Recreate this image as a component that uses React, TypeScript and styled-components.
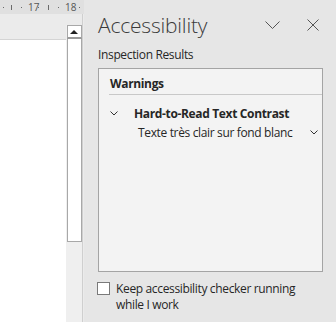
import React from "react";
import styled, { createGlobalStyle } from "styled-components";

const Global = createGlobalStyle`
  html, body { margin: 0; padding: 0; }
  body { width: 336px; height: 322px; overflow: hidden; font-family: "Open Sans", "Noto Sans", sans-serif; }
`;

const Screen = styled.div`
  display: flex;
  width: 336px;
  height: 322px;
  overflow: hidden;
`;

const LeftArea = styled.div`
  width: 84px;
  display: flex;
  flex-direction: column;
  background: #ebebeb;
`;

const Ruler = styled.div`
  height: 14px;
  background: #e0e0e0;
  position: relative;
  font-family: "Open Sans", sans-serif;
  font-size: 10px;
  color: #555;
`;

const RulerMark = styled.span<{ $x: number }>`
  position: absolute;
  left: ${(p) => p.$x}px;
  top: 0;
  line-height: 14px;
`;

const Tick = styled.span<{ $x: number; $h: number }>`
  position: absolute;
  left: ${(p) => p.$x}px;
  top: ${(p) => (14 - p.$h) / 2}px;
  width: 1px;
  height: ${(p) => p.$h}px;
  background: #6a6a6a;
`;

const Body = styled.div`
  flex: 1;
  display: flex;
`;

const DocColumn = styled.div`
  width: 66px;
  display: flex;
  flex-direction: column;
`;

const DocSpacer = styled.div`
  height: 25px;
`;

const Page = styled.div`
  flex: 1;
  background: #ffffff;
  border-top: 1px solid #d4d4d4;
`;

const ScrollColumn = styled.div`
  width: 17px;
  display: flex;
  flex-direction: column;
  padding-top: 11px;
  border-right: 1px solid #cfcfcf;
  background: linear-gradient(#ebebeb 0 11px, #efefef 11px);
  box-sizing: border-box;
  align-items: center;
`;

const ArrowButton = styled.div`
  width: 15px;
  height: 14px;
  box-sizing: border-box;
  background: #fff;
  border: 1px solid #a8a8a8;
  border-bottom: 2px solid #9a9a9a;
  display: flex;
  align-items: center;
  justify-content: center;
`;

const Triangle = styled.div`
  width: 0;
  height: 0;
  border-left: 4px solid transparent;
  border-right: 4px solid transparent;
  border-bottom: 4px solid #222;
`;

const Thumb = styled.div`
  width: 15px;
  height: 203px;
  box-sizing: border-box;
  background: #fff;
  border: 1px solid #a8a8a8;
  border-top: none;
`;

const Panel = styled.div`
  width: 252px;
  background: #e6e6e6;
  display: flex;
  flex-direction: column;
  padding: 0 12px 0 14px;
  box-sizing: border-box;
  color: #262626;
  font-family: "Open Sans", "Noto Sans", sans-serif;
  letter-spacing: -0.35px;
`;

const Header = styled.div`
  height: 48px;
  display: flex;
  align-items: center;
  padding-top: 2px;
  box-sizing: border-box;
`;

const Title = styled.div`
  flex: 1;
  font-size: 21px;
  font-weight: 300;
  color: #3a3a3a;
  letter-spacing: -0.2px;
`;

const IconButton = styled.div<{ $ml: number }>`
  margin-left: ${(p) => p.$ml}px;
  display: flex;
  align-items: center;
`;

const SectionLabel = styled.div`
  font-size: 12px;
  line-height: 16px;
  margin-top: -1px;
  margin-bottom: 5px;
`;

const ResultsBox = styled.div`
  height: 204px;
  margin-right: 1px;
  background: #f3f3f3;
  border: 1px solid #a4a4a4;
  padding: 6px 0 0 11px;
  box-sizing: border-box;
`;

const GroupHeader = styled.div`
  font-size: 12px;
  font-weight: 700;
  line-height: 18px;
  padding-left: 1px;
  padding-bottom: 1px;
  border-bottom: 1px solid #c8c8c8;
  margin-left: -1px;
`;

const IssueRow = styled.div`
  display: flex;
  align-items: center;
  margin-top: 9px;
  height: 18px;
  font-size: 12px;
  font-weight: 700;
`;

const Chevron = styled.div`
  width: 24px;
  display: flex;
  align-items: center;
`;

const SubRow = styled.div`
  display: flex;
  align-items: center;
  height: 18px;
  margin-top: 1px;
  padding-left: 28px;
  padding-right: 4px;
  font-size: 12px;
`;

const SubText = styled.div`
  flex: 1;
`;

const Footer = styled.div`
  display: flex;
  align-items: flex-start;
  margin-top: 9px;
  margin-left: -1px;
`;

const CheckBox = styled.div`
  width: 13px;
  height: 13px;
  box-sizing: border-box;
  border: 1px solid #7a7a7a;
  background: #fff;
  flex-shrink: 0;
  margin-top: 1px;
`;

const FooterText = styled.div`
  margin-left: 6px;
  font-size: 12px;
  line-height: 16px;
`;

const Spacer = styled.div`
  width: 5px;
`;

const ChevronDown = ({ w, color }: { w: number; color: string }) => (
  <svg width={w} height={w / 2 + 1} viewBox={`0 0 ${w} ${w / 2 + 1}`}>
    <polyline
      points={`0.5,0.5 ${w / 2},${w / 2} ${w - 0.5},0.5`}
      fill="none"
      stroke={color}
      strokeWidth={1}
    />
  </svg>
);

export default function App() {
  return (
    <>
      <Global />
      <Screen>
        <LeftArea>
          <Ruler>
            <Tick $x={3} $h={1} />
            <Tick $x={11} $h={5} />
            <Tick $x={21} $h={1} />
            <RulerMark $x={28}>17</RulerMark>
            <Tick $x={38} $h={1} />
            <Tick $x={48} $h={5} />
            <Tick $x={58} $h={1} />
            <RulerMark $x={65}>18</RulerMark>
            <Tick $x={79} $h={1} />
          </Ruler>
          <Body>
            <DocColumn>
              <DocSpacer />
              <Page />
            </DocColumn>
            <ScrollColumn>
              <ArrowButton>
                <Triangle />
              </ArrowButton>
              <Thumb />
            </ScrollColumn>
          </Body>
        </LeftArea>
        <Panel>
          <Header>
            <Title>Accessibility</Title>
            <IconButton $ml={0}>
              <ChevronDown w={15} color="#555" />
            </IconButton>
            <IconButton $ml={27}>
              <svg width="12" height="12" viewBox="0 0 12 12">
                <path d="M0.5 0.5 L11.5 11.5 M11.5 0.5 L0.5 11.5" stroke="#555" strokeWidth="1" fill="none" />
              </svg>
            </IconButton>
            <Spacer />
          </Header>
          <SectionLabel>Inspection Results</SectionLabel>
          <ResultsBox>
            <GroupHeader>Warnings</GroupHeader>
            <IssueRow>
              <Chevron>
                <ChevronDown w={8} color="#333" />
              </Chevron>
              Hard-to-Read Text Contrast
            </IssueRow>
            <SubRow>
              <SubText>Texte très clair sur fond blanc</SubText>
              <ChevronDown w={8} color="#333" />
            </SubRow>
          </ResultsBox>
          <Footer>
            <CheckBox />
            <FooterText>
              Keep accessibility checker running
              <br />
              while I work
            </FooterText>
          </Footer>
        </Panel>
      </Screen>
    </>
  );
}
